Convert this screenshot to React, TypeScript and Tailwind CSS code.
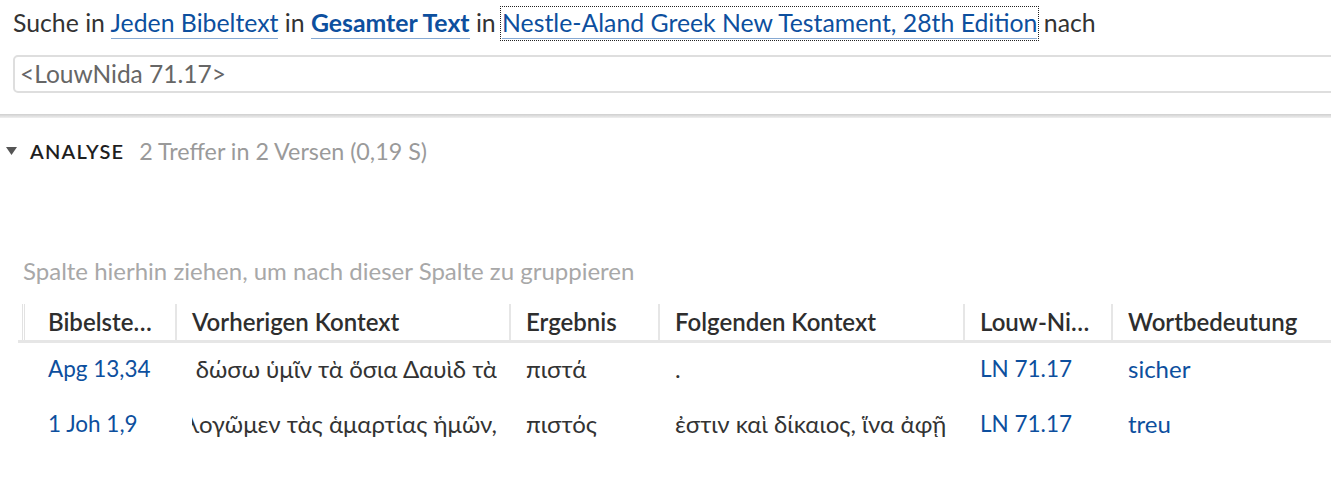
import React from 'react';

const columns = [
  { key: 'ref', title: 'Bibelste…', width: 'w-[152px]', pad: 'pl-[23px]' },
  { key: 'prev', title: 'Vorherigen Kontext', width: 'w-[334px]', pad: 'pl-[15px]' },
  { key: 'hit', title: 'Ergebnis', width: 'w-[149px]', pad: 'pl-[15px]' },
  { key: 'next', title: 'Folgenden Kontext', width: 'w-[305px]', pad: 'pl-[15px]' },
  { key: 'ln', title: 'Louw-Ni…', width: 'w-[148px]', pad: 'pl-[15px]' },
  { key: 'sense', title: 'Wortbedeutung', width: 'flex-1', pad: 'pl-[15px]' },
];

const rows = [
  {
    ref: 'Apg 13,34',
    prev: 'καὶ δώσω ὑμῖν τὰ ὅσια Δαυὶδ τὰ',
    hit: 'πιστά',
    next: '.',
    ln: 'LN 71.17',
    sense: 'sicher',
  },
  {
    ref: '1 Joh 1,9',
    prev: 'ἐὰν ὁμολογῶμεν τὰς ἁμαρτίας ἡμῶν,',
    hit: 'πιστός',
    next: 'ἐστιν καὶ δίκαιος, ἵνα ἀφῇ ἡμῖν τὰς ἁμαρτίας',
    ln: 'LN 71.17',
    sense: 'treu',
  },
];

function Link({ children, bold, focused }: { children: React.ReactNode; bold?: boolean; focused?: boolean }) {
  return (
    <span
      className={
        'text-[#0d4f9e] border-b border-[#86a9d3] pb-[1px] ' +
        (bold ? 'font-bold ' : '') +
        (focused ? 'outline-1 outline-dotted outline-[#222] outline-offset-[1px]' : '')
      }
    >
      {children}
    </span>
  );
}

export default function App() {
  return (
    <div
      className="w-[1331px] h-[478px] overflow-hidden bg-white text-[#333]"
      style={{ fontFamily: 'Lato, "Noto Sans", sans-serif' }}
    >
      {/* Suchzeile */}
      <div className="px-[13px] pt-[8px]">
        <div className="text-[24.8px] leading-[30px] whitespace-nowrap">
          Suche in <Link>Jeden Bibeltext</Link> in <Link bold>Gesamter Text</Link> in{' '}
          <Link focused>Nestle-Aland Greek New Testament, 28th Edition</Link> nach
        </div>
        <div className="mt-[17px] -mr-[40px] h-[38px] border-2 border-[#dedede] rounded-[5px] flex items-center px-[5px] text-[24.5px] text-[#666]">
          &lt;LouwNida 71.17&gt;
        </div>
      </div>

      <div className="mt-[21px] h-[4px] bg-gradient-to-b from-[#cfcfcf] to-[#efefef]" />

      {/* Analyse-Kopf */}
      <div className="flex items-center h-[30px] mt-[18px] pl-[6px] whitespace-nowrap">
        <svg width="11" height="8" viewBox="0 0 11 8" className="mr-[13px]">
          <path d="M0 0 L11 0 L5.5 8 Z" fill="#555" />
        </svg>
        <span className="text-[20px] font-semibold tracking-[0.06em] text-[#1e1e1e]">ANALYSE</span>
        <span className="ml-[15px] text-[23.3px] text-[#9a9a9a]">2 Treffer in 2 Versen (0,19 S)</span>
      </div>

      <div className="mt-[90px] pl-[23px] text-[24px] leading-[30px] text-[#a8a8a8] whitespace-nowrap">
        Spalte hierhin ziehen, um nach dieser Spalte zu gruppieren
      </div>

      {/* Tabelle */}
      <div className="mt-[18px] ml-[18px]">
        <div className="flex h-[39px] border-b-[3px] border-[#e6e6e6]">
          <div className="w-[7px] flex">
            <div className="ml-[4px] w-[3px] border-x border-[#e2e2e2]" />
          </div>
          {columns.map((c, i) => (
            <div
              key={c.key}
              className={
                c.width +
                ' ' +
                c.pad +
                ' flex items-center text-[24px] leading-[30px] font-semibold text-[#2e2e2e] whitespace-nowrap overflow-hidden ' +
                (i < columns.length - 1 ? 'border-r-2 border-[#e6e6e6]' : '')
              }
            >
              {c.title}
            </div>
          ))}
        </div>
        {rows.map((r, ri) => (
          <div
            key={ri}
            className={'flex h-[55px] text-[24px] leading-[30px] whitespace-nowrap ' + (ri === 0 ? '-mt-[2px]' : '')}
          >
            <div className="w-[7px]" />
            <div className="w-[152px] pl-[23px] flex items-center text-[22.5px] text-[#0d4f9e]">{r.ref}</div>
            <div className="w-[334px] pl-[15px] pr-[14px] flex items-center">
              <div className="w-full overflow-hidden flex justify-end">
                <span className="shrink-0">{r.prev}</span>
              </div>
            </div>
            <div className="w-[149px] pl-[15px] flex items-center">{r.hit}</div>
            <div className="w-[305px] pl-[15px] pr-[18px] flex items-center">
              <div className="w-full overflow-hidden">{r.next}</div>
            </div>
            <div className="w-[148px] pl-[15px] flex items-center text-[22.5px] text-[#0d4f9e]">{r.ln}</div>
            <div className="flex-1 pl-[15px] flex items-center text-[#0d4f9e]">{r.sense}</div>
          </div>
        ))}
      </div>
    </div>
  );
}
